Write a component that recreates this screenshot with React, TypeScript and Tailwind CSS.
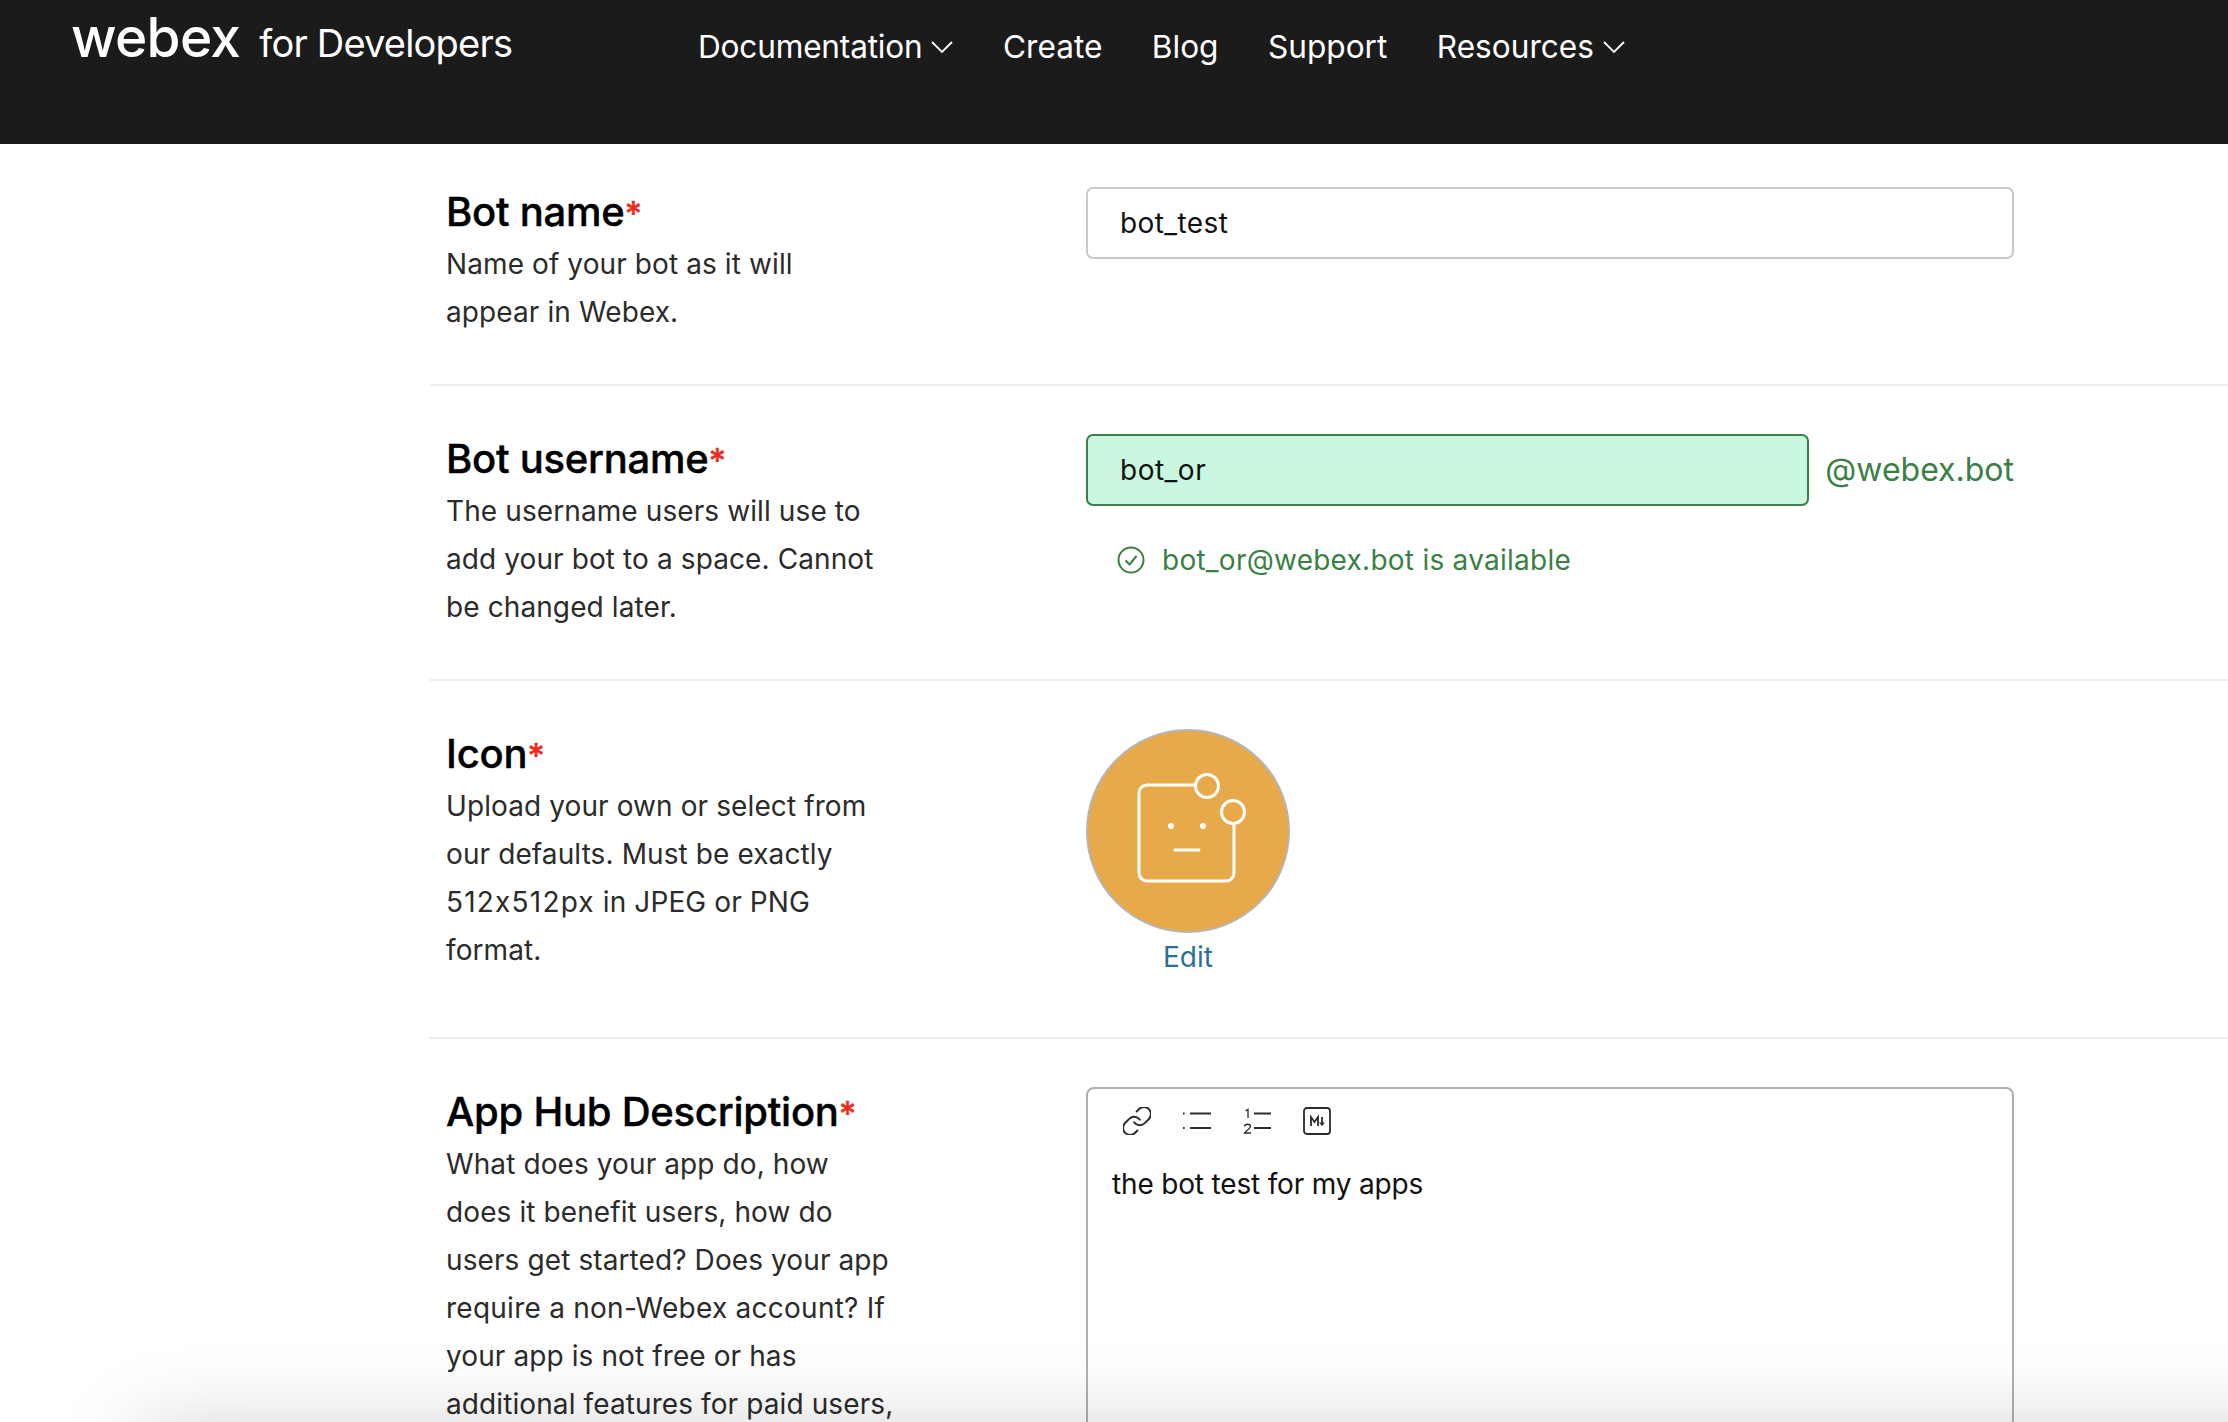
import type { ReactNode } from 'react';

const navItems = [
  { label: 'Documentation', menu: true, tight: true },
  { label: 'Create', menu: false, tight: false },
  { label: 'Blog', menu: false, tight: false },
  { label: 'Support', menu: false, tight: false },
  { label: 'Resources', menu: true, tight: false },
];

function Caret() {
  return (
    <svg viewBox="0 0 22 12" className="h-[12px] w-[22px]" fill="none" stroke="currentColor" strokeWidth="1.8">
      <path d="M1 1l10 10L21 1" />
    </svg>
  );
}

function Header() {
  return (
    <header className="flex h-[144px] items-start bg-[#1b1b1b] text-white">
      <div className="ml-[71px] flex h-[72px] w-[627px] items-baseline">
        <span className="text-[55px] leading-[74px] font-medium tracking-[-0.7px]">webex</span>
        <span className="ml-[19px] text-[38px] leading-[74px] tracking-[-0.8px]">for Developers</span>
      </div>
      <nav className="flex h-[94px] items-center gap-[49.5px] text-[31.6px]">
        {navItems.map((item) => (
          <a key={item.label} className={item.tight ? 'flex items-center gap-[9px] tracking-[-0.2px]' : 'flex items-center gap-[9px]'}>
            {item.label}
            {item.menu && <Caret />}
          </a>
        ))}
      </nav>
    </header>
  );
}

function Title({ text }: { text: string }) {
  return (
    <h2 className="-mb-[1px] text-[40px] leading-[55px] font-medium tracking-[-0.25px] text-black [-webkit-text-stroke:0.4px_black]">
      {text}
      <span className="text-[34px] text-[#ee2c1c] [-webkit-text-stroke:0.4px_#ee2c1c]">*</span>
    </h2>
  );
}

function Row({ title, desc, top, height, children }: { title: string; desc: ReactNode[]; top: string; height: string; children: ReactNode }) {
  return (
    <section className={`flex border-b-2 border-[#ececec] ${top} ${height}`}>
      <div className="-mt-[3px] w-[656px] shrink-0 pl-[16px]">
        <Title text={title} />
        <div className="text-[28px] leading-[48px] tracking-[0.1px] text-[#2b2b2b]">
          {desc.map((line, i) => (
            <p key={i}>{line}</p>
          ))}
        </div>
      </div>
      <div className="w-[928px]">{children}</div>
    </section>
  );
}

function RobotIcon() {
  return (
    <svg viewBox="1 2 200 200" className="h-[200px] w-[200px]" fill="none" stroke="white" strokeWidth="3">
      <path d="M108.500 56H60a8 8 0 0 0-8 8v80a8 8 0 0 0 8 8h79a8 8 0 0 0 8-8V95" />
      <circle cx="120" cy="57" r="11.500" />
      <circle cx="146" cy="83" r="11.500" />
      <circle cx="84" cy="97" r="3" fill="white" stroke="none" />
      <circle cx="116" cy="97" r="3" fill="white" stroke="none" />
      <path d="M88 121h24" strokeLinecap="round" />
    </svg>
  );
}

function Toolbar() {
  return (
    <div className="flex items-center gap-[32px] pl-[35px] pt-[18px] text-[#2b2b2b]">
      <svg viewBox="2 2 20 20" className="h-[28px] w-[28px]" fill="none" stroke="currentColor" strokeWidth="1.4" strokeLinecap="round">
        <path d="M10 13a5 5 0 0 0 7.540.54l3-3a5 5 0 0 0-7.070-7.070l-1.720 1.710" />
        <path d="M14 11a5 5 0 0 0-7.540-.54l-3 3a5 5 0 0 0 7.070 7.070l1.710-1.710" />
      </svg>
      <svg viewBox="0 0 28 28" className="h-[28px] w-[28px]" fill="none" stroke="currentColor" strokeWidth="1.8">
        <path d="M7 6.500h21M7 21h21" />
        <path d="M0 6.500h1.600M0 21h1.600" />
      </svg>
      <svg viewBox="0 0 28 28" className="h-[28px] w-[28px]" fill="none" stroke="currentColor" strokeWidth="1.8">
        <path d="M11 6.500h17M11 21h17" />
        <path d="M2.500 4 5 2.500V11" strokeWidth="1.300" />
        <path d="M1.500 19.500c.5-3 6-3 6 0 0 2-4 3.500-6 6.500h6.500" strokeWidth="1.300" />
      </svg>
      <svg viewBox="0 0 28 28" className="h-[28px] w-[28px]" fill="none" stroke="currentColor" strokeWidth="1.800">
        <rect x="1" y="1" width="26" height="26" rx="3" />
        <path d="M8 19v-9l3.500 5 3.500-5v9" />
        <path d="M19 10v8" />
        <path d="M16 15.500h6l-3 3.500z" fill="currentColor" stroke="none" />
      </svg>
    </div>
  );
}

export default function App() {
  return (
    <div className="relative h-[1422px] w-[2228px] overflow-hidden bg-white font-['Inter',sans-serif]">
      <Header />
      <main className="pl-[430px]">
        <Row title="Bot name" desc={['Name of your bot as it will', 'appear in Webex.']} top="pt-[43px]" height="h-[242px]">
          <div className="flex h-[72px] items-center rounded-[7px] border-2 border-[#c9c9c9] pl-[32px] text-[28px] tracking-[0.4px] text-[#111]">bot_test</div>
        </Row>
        <Row
          title="Bot username"
          desc={['The username users will use to', 'add your bot to a space. Cannot', 'be changed later.']}
          top="pt-[48px]"
          height="h-[295px]"
        >
          <div className="flex items-center justify-between">
            <div className="flex h-[72px] w-[723px] items-center rounded-[7px] border-2 border-[#3a7f45] bg-[#caf7e0] pl-[32px] text-[28px] tracking-[0.5px] text-[#111]">bot_or</div>
            <span className="text-[32px] text-[#3a7f45]">@webex.bot</span>
          </div>
          <div className="mt-[33px] flex items-center gap-[17px] pl-[31px] text-[28px] tracking-[0.25px] text-[#3a7f45]">
            <svg viewBox="0 0 28 28" className="h-[28px] w-[28px]" fill="none" stroke="currentColor" strokeWidth="2">
              <circle cx="14" cy="14" r="12.500" />
              <path d="M8.500 14.500 12.500 18.500 19.500 10" />
            </svg>
            bot_or@webex.bot is available
          </div>
        </Row>
        <Row
          title="Icon"
          desc={[
            'Upload your own or select from',
            'our defaults. Must be exactly',
            <>
              <span className="tracking-[1.2px]">512x512px</span> in JPEG or PNG
            </>,
            'format.',
          ]}
          top="pt-[48px]"
          height="h-[358px]"
        >
          <div className="flex w-[204px] flex-col items-center">
            <div className="flex h-[204px] w-[204px] items-center justify-center rounded-full border-2 border-[#b5b5b5] bg-[#e8a94b]">
              <RobotIcon />
            </div>
            <a className="mt-[4px] text-[28px] leading-[40px] text-[#2a6f97]">Edit</a>
          </div>
        </Row>
        <section className="flex pt-[48px]">
          <div className="-mt-[3px] w-[656px] shrink-0 pl-[16px]">
            <Title text="App Hub Description" />
            <div className="text-[28px] leading-[48px] tracking-[0.1px] text-[#2b2b2b]">
              <p>What does your app do, how</p>
              <p>does it benefit users, how do</p>
              <p>users get started? Does your app</p>
              <p className="tracking-[0.25px]">require a non-Webex account? If</p>
              <p>your app is not free or has</p>
              <p>additional features for paid users,</p>
            </div>
          </div>
          <div className="h-[400px] w-[928px] rounded-t-[8px] border-2 border-[#b0b0b0]">
            <Toolbar />
            <p className="mt-[25px] pl-[24px] text-[28px] leading-[48px] tracking-[-0.17px] text-[#111]">the bot test for my apps</p>
          </div>
        </section>
      </main>
      {/* soft shadow rising from the bottom of the window */}
      <div className="absolute top-[1432px] right-[-120px] left-[140px] h-[100px] shadow-[0_0_90px_rgba(0,0,0,0.2)]" />
    </div>
  );
}
